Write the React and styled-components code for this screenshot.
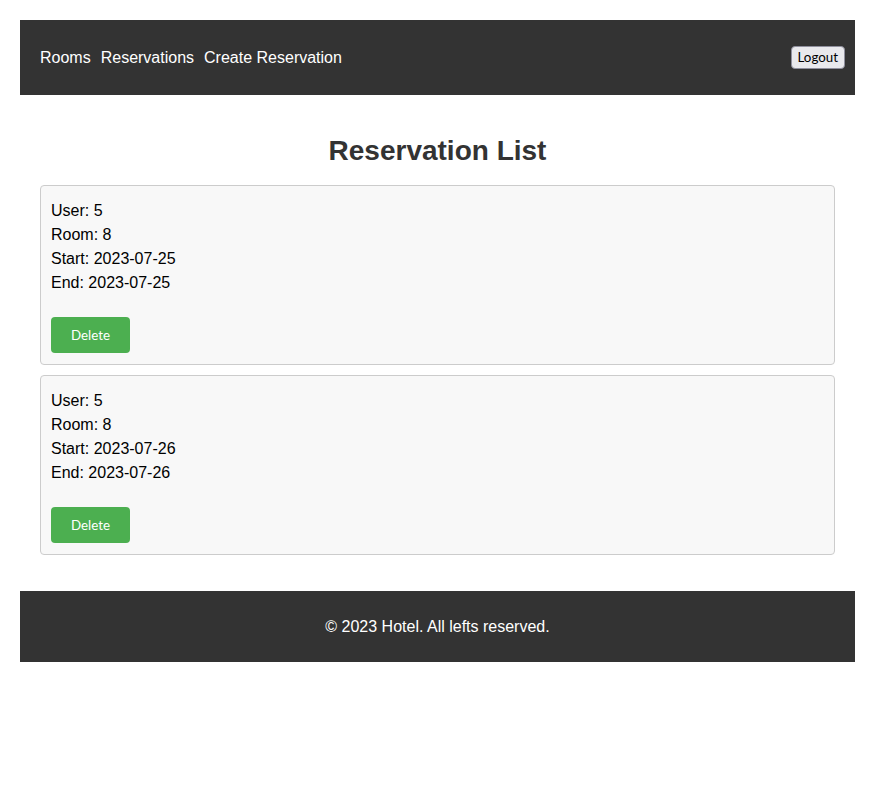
import React, { useState } from 'react';
import styled, { createGlobalStyle } from 'styled-components';

const GlobalStyle = createGlobalStyle`
  body {
    margin: 0;
    padding: 20px;
    background: #fff;
    font-family: "Liberation Sans", Arial, sans-serif;
  }
`;

const Header = styled.header`
  display: flex;
  justify-content: space-between;
  align-items: center;
  height: 75px;
  box-sizing: border-box;
  padding: 0 10px 0 20px;
  background-color: #333;
`;

const Nav = styled.nav`
  display: flex;
  gap: 10px;
`;

const NavLink = styled.a`
  color: #fff;
  font-size: 16px;
  text-decoration: none;
  cursor: pointer;
`;

const LogoutButton = styled.button`
  font-family: Lato, "Noto Sans", sans-serif;
  font-size: 13.33px;
  line-height: 19px;
  height: 23px;
  color: #000;
  background-color: #e9e9ed;
  border: 1px solid #8f8f9d;
  border-radius: 4px;
  padding: 0 6px;
  cursor: pointer;

  &:hover {
    background-color: #d0d0d7;
  }
`;

const Main = styled.main`
  padding: 20px;
`;

const Topic = styled.h1`
  margin: 20px 0 18px;
  font-size: 28px;
  line-height: 32px;
  text-align: center;
  color: #333;
`;

const List = styled.div`
  display: flex;
  flex-direction: column;
  gap: 10px;
  padding-bottom: 16px;
`;

const Card = styled.div`
  background-color: #f8f8f8;
  border: 1px solid #ccc;
  border-radius: 4px;
  padding: 13px 10px 11px;
`;

const Line = styled.div`
  font-size: 16px;
  line-height: 24px;
  color: #000;
`;

const DeleteButton = styled.button`
  display: block;
  margin-top: 22px;
  font-family: Lato, "Noto Sans", sans-serif;
  font-size: 13.33px;
  line-height: 16px;
  background-color: #4caf50;
  color: #fff;
  border: none;
  border-radius: 4px;
  padding: 10px 20px;
  cursor: pointer;
  transition: background-color 0.3s;

  &:hover {
    background-color: #3e8e41;
  }
`;

const Footer = styled.footer`
  background-color: #333;
  color: #fff;
  text-align: center;
  font-size: 16px;
  line-height: 19px;
  padding: 26px 0;
`;

const initial = [
  { id: 1, user: 5, room: 8, start: '2023-07-25', end: '2023-07-25' },
  { id: 2, user: 5, room: 8, start: '2023-07-26', end: '2023-07-26' },
];

function App() {
  const [reservations, setReservations] = useState(initial);

  const handleDelete = (id) => {
    setReservations(reservations.filter((r) => r.id !== id));
  };

  return (
    <>
      <GlobalStyle />
      <Header>
        <Nav>
          <NavLink>Rooms</NavLink>
          <NavLink>Reservations</NavLink>
          <NavLink>Create Reservation</NavLink>
        </Nav>
        <LogoutButton>Logout</LogoutButton>
      </Header>
      <Main>
        <Topic>Reservation List</Topic>
        <List>
          {reservations.map((data) => (
            <Card key={data.id}>
              <Line>User: {data.user}</Line>
              <Line>Room: {data.room}</Line>
              <Line>Start: {data.start}</Line>
              <Line>End: {data.end}</Line>
              <DeleteButton onClick={() => handleDelete(data.id)}>Delete</DeleteButton>
            </Card>
          ))}
        </List>
      </Main>
      <Footer>© 2023 Hotel. All lefts reserved.</Footer>
    </>
  );
}

export default App;
